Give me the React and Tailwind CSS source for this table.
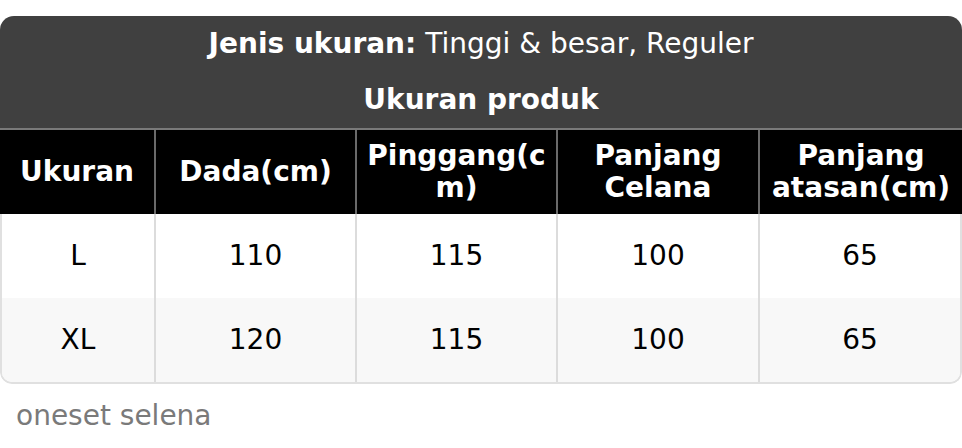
import React from "react";

const rows = [
  ["L", "110", "115", "100", "65"],
  ["XL", "120", "115", "100", "65"],
];

export default function App() {
  return (
    <div className="w-[962px] h-[448px] bg-white" style={{ fontFamily: '"DejaVu Sans", sans-serif' }}>
      <div className="pt-4">
        <div className="rounded-t-[14px] rounded-b-[12px] overflow-hidden">
          <div className="bg-[#404040] text-white text-[28px] text-center h-[112px] flex flex-col">
            <div className="h-[56px] flex items-center justify-center">
              <span className="font-bold">Jenis ukuran:</span>
              <span className="whitespace-pre"> Tinggi &amp; besar, Reguler</span>
            </div>
            <div className="h-[56px] flex items-center justify-center font-bold">Ukuran produk</div>
          </div>
          <div className="grid grid-cols-[154px_201px_201px_202px_1fr] bg-black text-white font-bold text-[28px] leading-[32px] border-t-2 border-[#7a7a7a] h-[86px]">
            <div className="flex items-center justify-center text-center px-2">Ukuran</div>
            <div className="flex items-center justify-center text-center px-2 border-l-2 border-[#6a6a6a]">Dada(cm)</div>
            <div className="flex items-center justify-center text-center px-2 border-l-2 border-[#6a6a6a] break-all">Pinggang(cm)</div>
            <div className="flex items-center justify-center text-center px-2 border-l-2 border-[#6a6a6a]">Panjang Celana</div>
            <div className="flex items-center justify-center text-center px-1 border-l-2 border-[#6a6a6a]">Panjang atasan(cm)</div>
          </div>
          <div className="border-x-2 border-b-2 border-[#e0e0e0] rounded-b-[12px] overflow-hidden">
            {rows.map((r, i) => (
              <div
                key={i}
                className={
                  i % 2 === 0
                    ? "grid grid-cols-[152px_201px_201px_202px_1fr] h-[84px] bg-white text-[28px] text-black"
                    : "grid grid-cols-[152px_201px_201px_202px_1fr] h-[84px] bg-[#f8f8f8] text-[28px] text-black"
                }
              >
                {r.map((c, j) => (
                  <div
                    key={j}
                    className={
                      j === 0
                        ? "flex items-center justify-center"
                        : "flex items-center justify-center border-l-2 border-[#dcdcdc]"
                    }
                  >
                    {c}
                  </div>
                ))}
              </div>
            ))}
          </div>
        </div>
        <div className="px-[16px] pt-[16px] text-[28px] leading-[32px] text-[#7a7a7a]">oneset selena</div>
      </div>
    </div>
  );
}
